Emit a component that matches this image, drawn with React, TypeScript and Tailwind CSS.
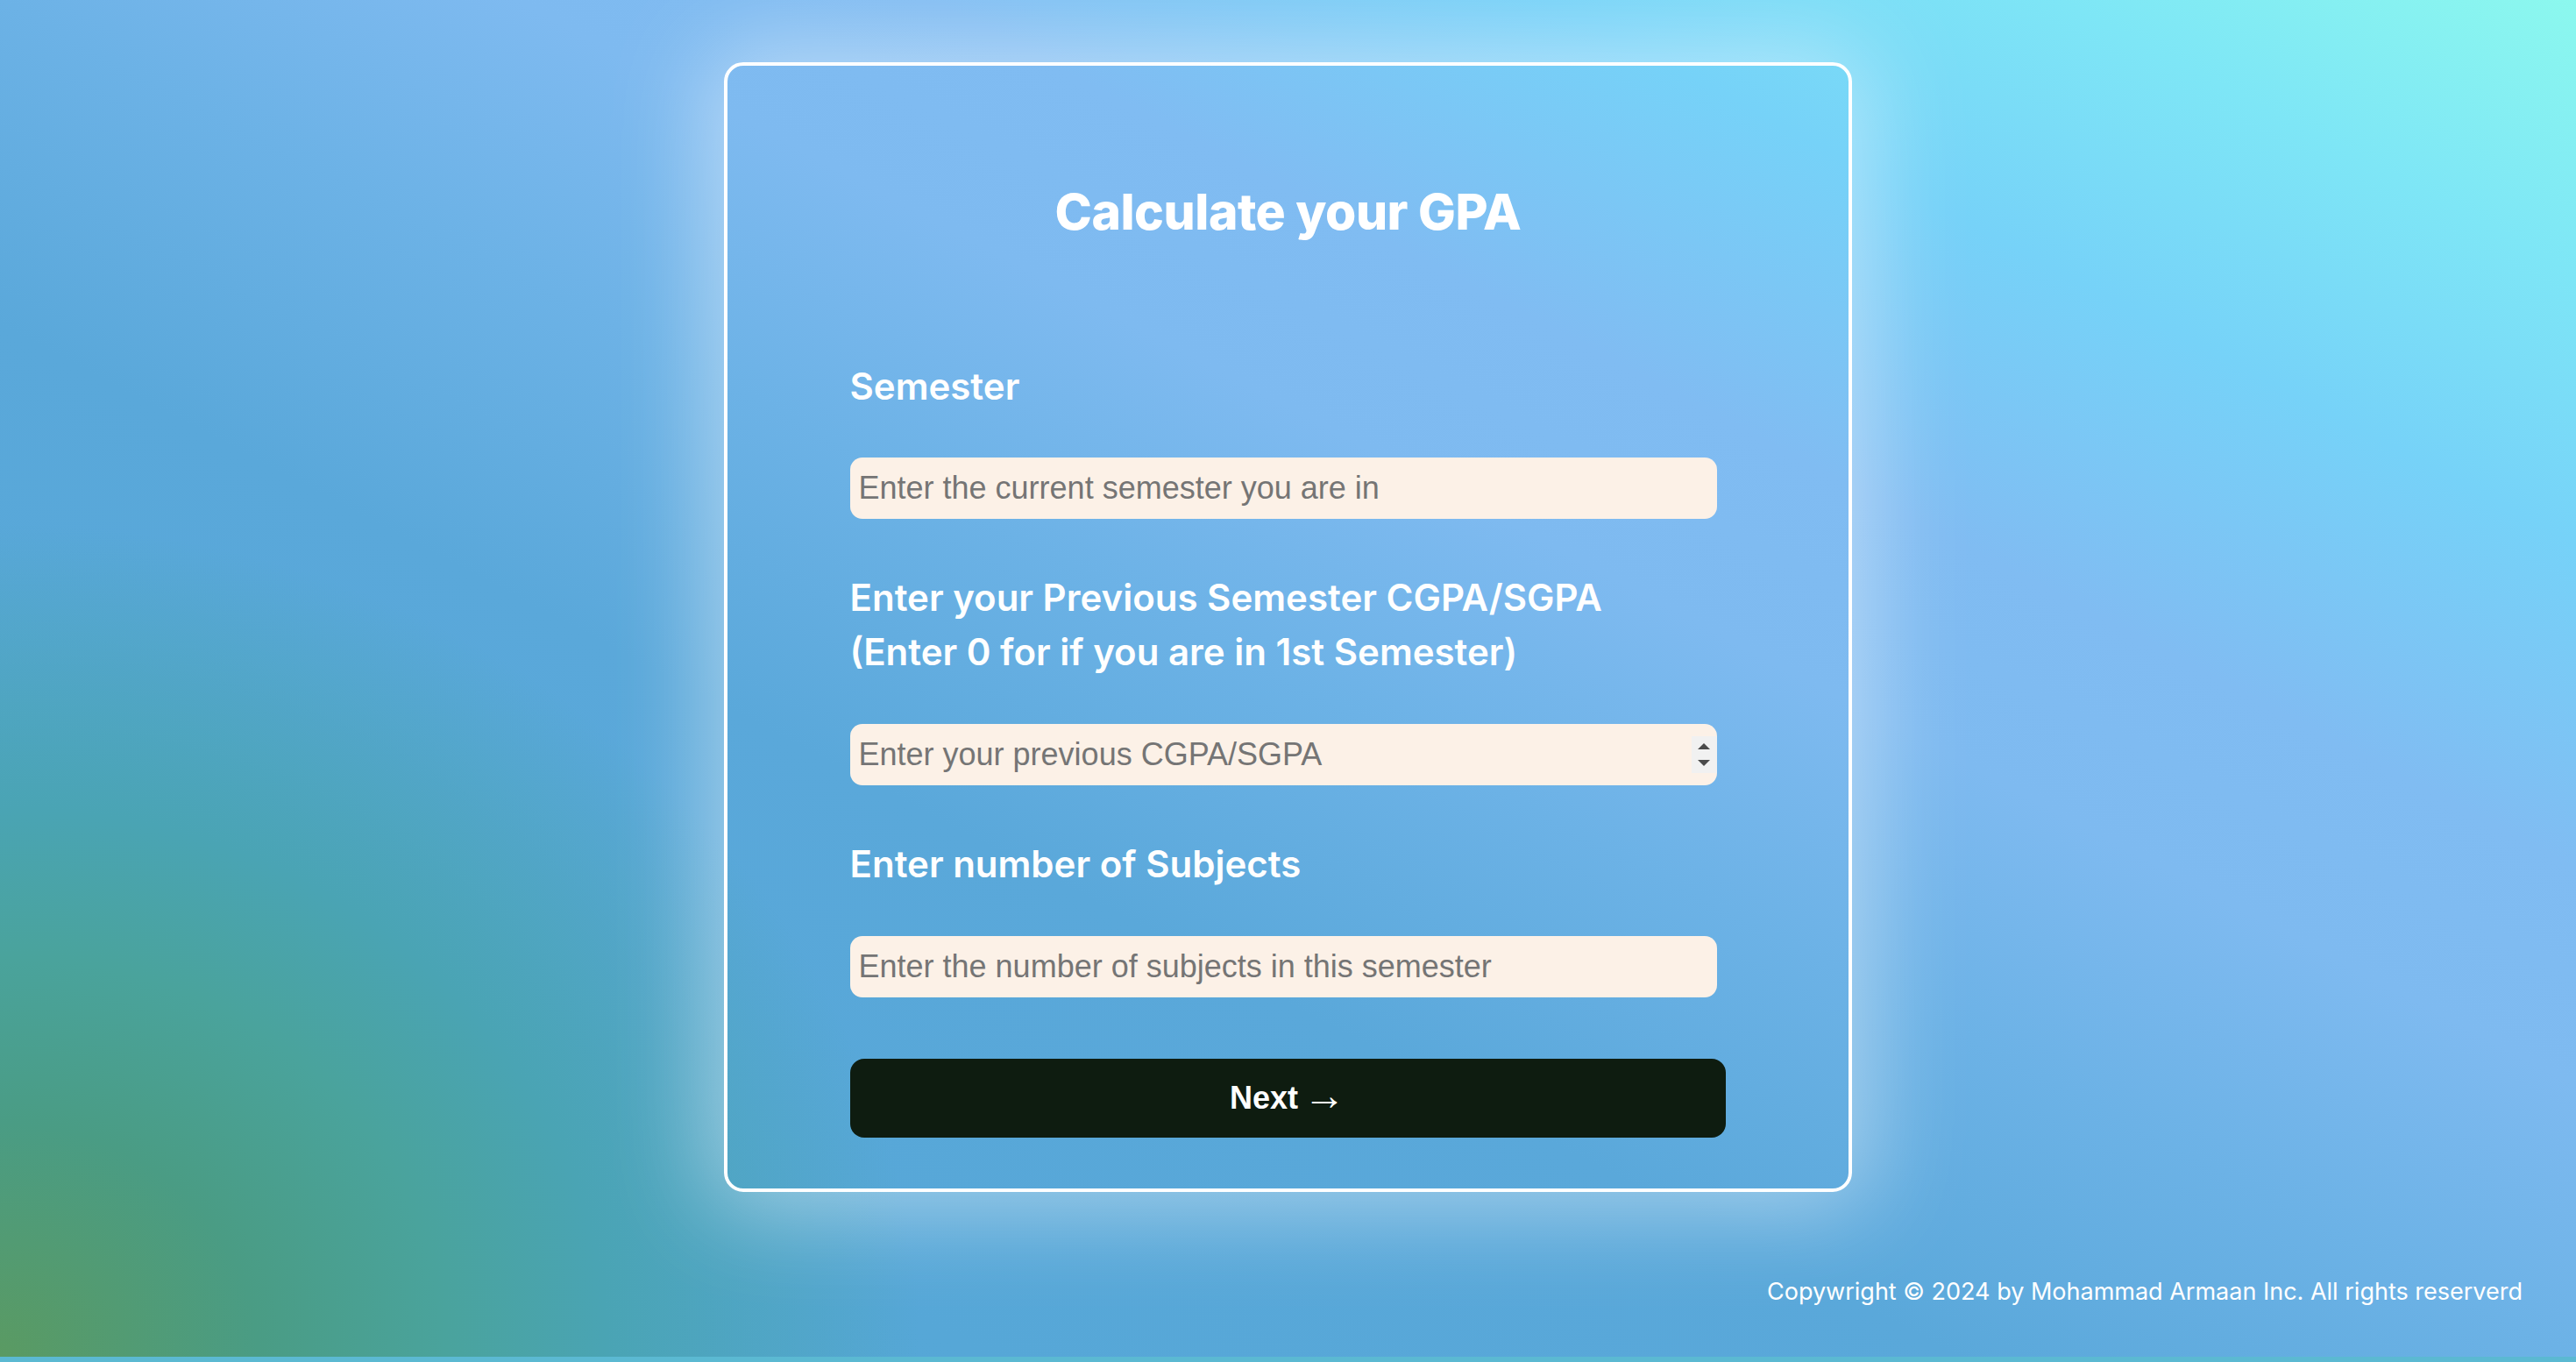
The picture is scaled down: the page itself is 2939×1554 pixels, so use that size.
import React from 'react';

const labelCls = "self-start text-white font-semibold text-[42px] leading-[48px] font-['Inter',sans-serif]";
const inputCls = "w-[989px] h-[70px] rounded-[14px] bg-[#fcf1e7] pl-[10px] pr-[40px] text-[36px] text-[#333] placeholder:text-[#757575] font-['Liberation_Sans',Arial,sans-serif] outline-none";

export default function App() {
  return <div className="min-h-screen bg-[#5bb9d2]">
      <div className="h-[1548px] flex flex-col bg-[radial-gradient(1050px_950px_at_0%_100%,#5a9a62_0%,#4a9c84_28%,#4aa39c_48%,#4aa4b4_66%,rgba(82,166,212,0)_100%),linear-gradient(to_top_right,#52a6d4_0%,#5aa8da_38%,#6cb2e6_50%,#7ebaf0_60%,#80bcf2_68%,#76d2f8_80%,#7ee6f6_90%,#8cf8ee_100%)]">
        <main className="flex justify-center pt-[71px]">
          <form className="w-[1287px] h-[1289px] rounded-[22px] border-4 border-white shadow-[0_0_110px_20px_rgba(255,255,255,0.45)] flex flex-col items-center pt-[135px]">
            <div className="w-[1000px] flex flex-col items-start">
              <h1 className="self-stretch text-center text-white font-extrabold text-[57px] leading-[64px] tracking-[-0.5px] font-['Inter',sans-serif]">
                Calculate your GPA
              </h1>

              <label className={labelCls + " mt-[143px]"}>Semester</label>
              <input type="text" className={inputCls + " mt-[57px]"} placeholder="Enter the current semester you are in" />

              <label className="mt-[59px] self-start text-white font-semibold text-[42px] leading-[62px] font-['Inter',sans-serif]">
                Enter your Previous Semester CGPA/SGPA
                <br />
                (Enter 0 for if you are in 1st Semester)
              </label>
              <div className="relative mt-[51px]">
                <input type="text" inputMode="decimal" className={inputCls} placeholder="Enter your previous CGPA/SGPA" />
                <div className="absolute right-0 top-[14px] w-[29px] h-[42px] bg-[#f1f1f1] flex flex-col items-center justify-center gap-[12px] pointer-events-none">
                  <svg width="14" height="7" viewBox="0 0 14 7"><path d="M7 0L14 7H0z" fill="#4b4b4b" /></svg>
                  <svg width="14" height="7" viewBox="0 0 14 7"><path d="M0 0H14L7 7z" fill="#4b4b4b" /></svg>
                </div>
              </div>

              <label className={labelCls + " mt-[66px]"}>Enter number of Subjects</label>
              <input type="text" className={inputCls + " mt-[58px]"} placeholder="Enter the number of subjects in this semester" />

              <button type="button" className="mt-[70px] w-[999px] h-[90px] rounded-[16px] bg-[#0e1c10] text-white font-bold text-[36px] font-['Liberation_Sans',Arial,sans-serif] flex items-center justify-center gap-[6px]">
                <span>Next</span>
                <span className="font-normal text-[48px] leading-none -mt-[6px]">→</span>
              </button>
            </div>
          </form>
        </main>
        <footer className="mt-[96px] pr-[61px] text-right text-white text-[27px] leading-[36px] font-['Inter',sans-serif]">
          Copywright © 2024 by Mohammad Armaan Inc. All rights reserverd
        </footer>
      </div>
    </div>;
}
